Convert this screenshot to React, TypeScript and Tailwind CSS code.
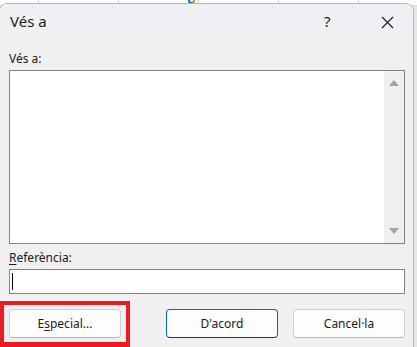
import React from "react";

function SheetStrip() {
  // the worksheet peeking out above the dialog
  const cols = [38, 118, 198, 278, 358];
  return (
    <div className="absolute inset-0 bg-[#e6e6e6]">
      <div className="relative h-[6px] bg-white border-b border-[#d9d9d9]">
        {cols.map((x) => (
          <div
            key={x}
            className="absolute top-0 bottom-0 w-px bg-[#d4d4d4]"
            style={{ left: x }}
          />
        ))}
        <div className="absolute left-[188px] top-[-3px] w-[7px] h-[7px] rounded-full border-2 border-[#1f6fc5] border-r-[#e58b1f]" />
      </div>
    </div>
  );
}

function Btn({
  children,
  primary,
}: {
  children: React.ReactNode;
  primary?: boolean;
}) {
  return (
    <button
      className={`w-[112px] h-[29px] rounded-[4px] bg-[#fdfdfd] text-[12px] text-[#1a1a1a] border ${
        primary ? "border-[#0067c0] border-b-[#003e92]" : "border-[#d0d0d0] border-b-[#b8b8b8]"
      }`}
    >
      {children}
    </button>
  );
}

export default function App() {
  return (
    <div
      className="relative w-[417px] h-[347px] overflow-hidden"
      style={{ fontFamily: '"Segoe UI", "Noto Sans", "Open Sans", sans-serif' }}
    >
      <SheetStrip />

      {/* dialog */}
      <div className="absolute left-[-1px] top-[3px] w-[415px] bottom-[-10px] rounded-t-[8px] border border-[#b5b5b5] bg-[#f0f0f0] flex flex-col overflow-hidden">
        <div className="h-[36px] shrink-0 bg-[#eff0f4] flex items-center pl-[10px] text-[15px] text-[#1b1b1b]">
          <span className="flex-1 pb-[1px]">Vés a</span>
          <span className="w-[20px] pb-[1px] text-[15px]">?</span>
          <div className="w-[69px] flex justify-center pr-[3px]">
            <svg width="13" height="13" viewBox="0 0 13 13" className="ml-[20px]">
              <path d="M1 1 L12 12 M12 1 L1 12" stroke="#1b1b1b" strokeWidth="1.1" />
            </svg>
          </div>
        </div>

        <div className="flex flex-col pl-[9px] pr-[8px] pt-[11px] text-[12px] leading-[16px] text-[#1a1a1a]">
          <label>Vés a:</label>
          <div className="mt-[3px] h-[174px] border border-[#7f838c] bg-white flex">
            <div className="flex-1" />
            <div className="w-[20px] bg-[#f0f0f0] flex flex-col items-center justify-between py-[9px]">
              <div className="w-0 h-0 border-l-[5px] border-r-[5px] border-b-[6px] border-l-transparent border-r-transparent border-b-[#a3a3a3]" />
              <div className="w-0 h-0 border-l-[5px] border-r-[5px] border-t-[6px] border-l-transparent border-r-transparent border-t-[#a3a3a3]" />
            </div>
          </div>

          <label className="mt-[6px]">
            <span className="underline underline-offset-2">R</span>eferència:
          </label>
          <div className="mt-[3px] h-[25px] border border-[#7f838c] bg-white flex items-center pl-[2px]">
            <div className="w-px h-[17px] bg-black" />
          </div>

          <div className="mt-[15px] flex items-center">
            <Btn>
              E<span className="underline underline-offset-2">s</span>pecial...
            </Btn>
            <div className="flex-1" />
            <div className="flex gap-[15px]">
              <Btn primary>D'acord</Btn>
              <Btn>Cancel·la</Btn>
            </div>
          </div>
        </div>
      </div>

      {/* annotation */}
      <div className="absolute left-0 top-[301px] w-[130px] h-[46px] border-[4px] border-b-[5px] border-[#e81c24]" />
    </div>
  );
}
